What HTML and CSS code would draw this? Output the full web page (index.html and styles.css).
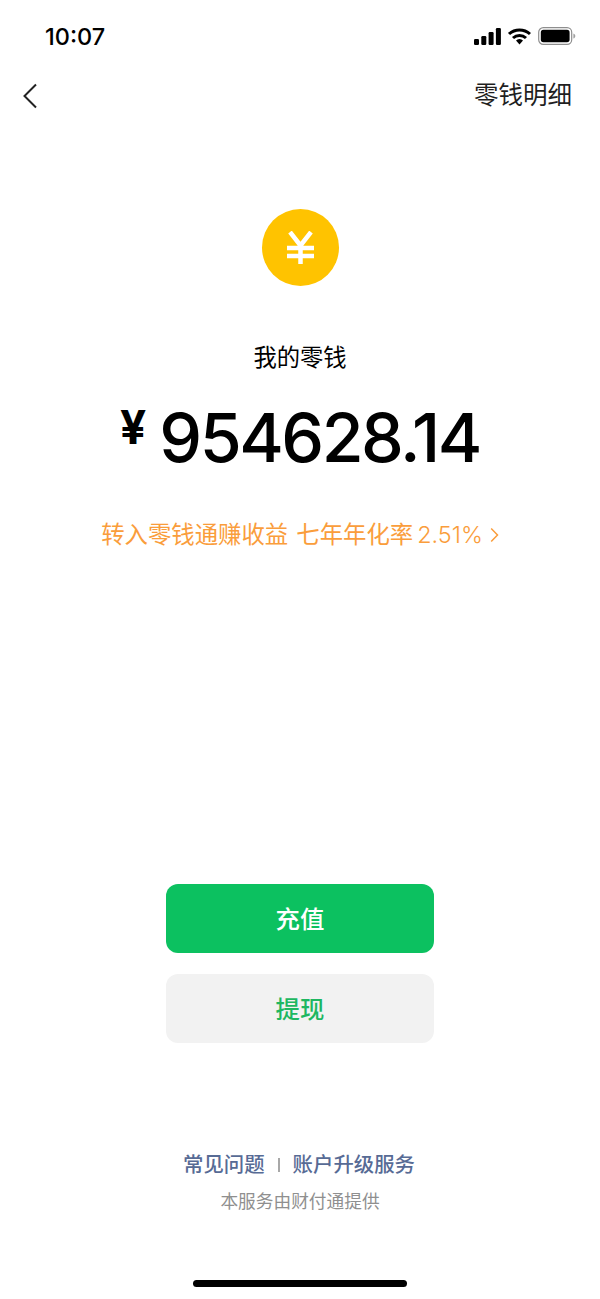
FILE: index.html
```html
<!DOCTYPE html>
<html lang="zh">
<head>
  <meta charset="UTF-8">
  <meta name="viewport" content="width=device-width, initial-scale=1.0">
  <title>我的零钱</title>
  <link rel="stylesheet" href="styles.css">
</head>
<body>
  <div class="page">
    <!-- 状态栏 -->
    <div class="status-bar">
      <span class="time">10:07</span>
      <div class="status-icons">
        <svg class="signal" width="27" height="17" viewBox="0 0 27 17">
          <rect x="0" y="11" width="5" height="6" rx="1.2"/>
          <rect x="7.3" y="8" width="5" height="9" rx="1.2"/>
          <rect x="14.6" y="4" width="5" height="13" rx="1.2"/>
          <rect x="21.9" y="0" width="5" height="17" rx="1.2"/>
        </svg>
        <svg class="wifi" width="23" height="17" viewBox="0 0 23 17">
          <path d="M1 6a15.5 15.5 0 0 1 21 0" fill="none" stroke="#000" stroke-width="3"/>
          <path d="M5 10a9.5 9.5 0 0 1 13 0" fill="none" stroke="#000" stroke-width="3"/>
          <path d="M8 12.6a4.8 4.8 0 0 1 7 0L11.5 16.6z"/>
        </svg>
        <svg class="battery" width="38" height="18" viewBox="0 0 38 18">
          <rect x="0.7" y="0.7" width="33" height="16.6" rx="4.6" fill="none" stroke="#8e8e8e" stroke-width="1.2"/>
          <rect x="2.8" y="2.8" width="28.8" height="12.4" rx="2.6"/>
          <path d="M35.4 6.4c1.2.4 1.9 1.4 1.9 2.6s-.7 2.2-1.9 2.6z" fill="#a0a0a0"/>
        </svg>
      </div>
    </div>

    <!-- 导航 -->
    <div class="nav">
      <svg class="back" width="16" height="26" viewBox="0 0 16 26">
        <path d="M14 1.5 2.5 13 14 24.5" fill="none" stroke="#222" stroke-width="2"/>
      </svg>
      <span class="nav-link">零钱明细</span>
    </div>

    <div class="balance">
      <div class="coin">
        <svg width="27" height="33" viewBox="0 0 27 33">
          <path d="M3 1 13.5 14.5 24 1M13.5 14.5V33M0 17H27M0 25H27" fill="none" stroke="#fff" stroke-width="4.5"/>
        </svg>
      </div>
      <div class="balance-label">我的零钱</div>
      <div class="amount">
        <span class="currency">¥</span><span class="number">954628.14</span>
      </div>
      <div class="promo">
        <span>转入零钱通赚收益</span>
        <span>七年年化率</span>
        <span class="promo-rate">2.51%</span>
        <svg class="promo-arrow" width="9" height="16" viewBox="0 0 9 16">
          <path d="M1.2 1.5 7.5 8 1.2 14.5" fill="none" stroke="#fa9d3b" stroke-width="1.5"/>
        </svg>
      </div>
    </div>

    <div class="actions">
      <button class="btn btn-primary">充值</button>
      <button class="btn btn-secondary">提现</button>
    </div>

    <div class="footer">
      <div class="footer-links">
        <span>常见问题</span>
        <i class="divider"></i>
        <span>账户升级服务</span>
      </div>
      <div class="footer-note">本服务由财付通提供</div>
    </div>

    <div class="home-bar"></div>
  </div>
</body>
</html>
```

FILE: styles.css
```css
* {
  box-sizing: border-box;
}
body {
  margin: 0;
  background: #fff;
  font-family: Inter, "Noto Sans CJK SC", sans-serif;
  color: #000;
}
.page {
  width: 600px;
  height: 1299px;
  overflow: hidden;
  display: flex;
  flex-direction: column;
}
.status-bar {
  height: 72px;
  padding: 0 24px 0 45px;
  display: flex;
  align-items: center;
  justify-content: space-between;
}
.time {
  font-size: 23.5px;
  font-weight: 500;
}
.status-icons {
  display: flex;
  align-items: center;
  gap: 7px;
}
.nav {
  height: 48px;
  padding: 0 28px 0 22px;
  display: flex;
  align-items: center;
  justify-content: space-between;
}
.nav-link {
  font-size: 24.5px;
  line-height: 44px;
  margin-bottom: 3px;
  color: #1f1f1f;
}
.balance {
  margin-top: 89px;
  display: flex;
  flex-direction: column;
  align-items: center;
}
.coin {
  width: 77px;
  height: 77px;
  border-radius: 50%;
  background: #ffc300;
  display: flex;
  align-items: center;
  justify-content: center;
}
.balance-label {
  margin-top: 55px;
  font-size: 23.3px;
  line-height: 34px;
}
.amount {
  margin-top: 20px;
  display: flex;
  align-items: flex-start;
  height: 84px;
}
.currency {
  font-size: 46px;
  font-weight: 700;
  line-height: 56px;
  margin-top: 4px;
  margin-right: 13px;
}
.number {
  font-size: 68px;
  font-weight: 500;
  letter-spacing: -2.5px;
  line-height: 84px;
}
.promo {
  margin-top: 39px;
  display: flex;
  align-items: center;
  gap: 8px;
  font-size: 23.4px;
  line-height: 34px;
  color: #fa9d3b;
}
.promo-rate {
  margin-left: -4px;
  font-size: 23.4px;
  font-weight: 300;
}
.promo-arrow {
  margin-left: -1px;
}
.actions {
  margin-top: 332px;
  display: flex;
  flex-direction: column;
  align-items: center;
  gap: 21px;
}
.btn {
  width: 268px;
  height: 69px;
  padding-bottom: 3px;
  border: none;
  border-radius: 12px;
  font-family: inherit;
  font-size: 24.4px;
  font-weight: 500;
}
.btn-primary {
  background: #0cc160;
  color: #fff;
}
.btn-secondary {
  background: #f2f2f2;
  color: #1eb761;
}
.footer {
  margin-top: 105px;
  display: flex;
  flex-direction: column;
  align-items: center;
}
.footer-links {
  margin-right: 2px;
  display: flex;
  align-items: center;
  gap: 13px;
  font-size: 20.4px;
  font-weight: 500;
  line-height: 34px;
  color: #576b95;
}
.divider {
  width: 2px;
  height: 14px;
  background: #a8a8a8;
}
.footer-note {
  margin-top: 8px;
  font-size: 17.7px;
  line-height: 24px;
  color: #8f8f8f;
}
.home-bar {
  width: 214px;
  height: 7px;
  border-radius: 4px;
  background: #000;
  margin: 66px auto 0;
}
```
